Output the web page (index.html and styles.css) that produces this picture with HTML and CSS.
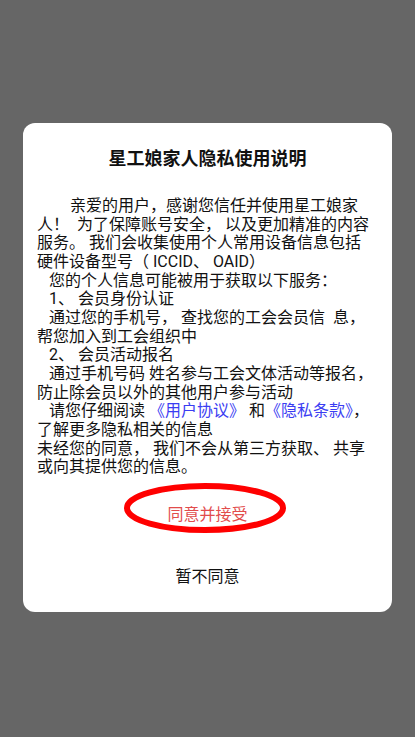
FILE: index.html
```html
<!DOCTYPE html>
<html lang="zh-CN">
<head>
    <meta charset="UTF-8">
    <meta name="viewport" content="width=device-width, initial-scale=1.0">
    <title>隐私使用说明</title>
    <link rel="stylesheet" href="styles.css">
</head>
<body>
    <div class="dialog">
        <h1 class="dialog-title">星工娘家人隐私使用说明</h1>
        <div class="dialog-body">
            <div class="line first">亲爱的用户，感谢您信任并使用星工娘家</div>
            <div class="line">人！  为了保障账号安全， 以及更加精准的内容</div>
            <div class="line">服务。 我们会收集使用个人常用设备信息包括</div>
            <div class="line">硬件设备型号（ ICCID、 OAID）</div>
            <div class="line ind">您的个人信息可能被用于获取以下服务：</div>
            <div class="line ind">1、 会员身份认证</div>
            <div class="line ind">通过您的手机号， 查找您的工会会员信  息，</div>
            <div class="line">帮您加入到工会组织中</div>
            <div class="line ind">2、 会员活动报名</div>
            <div class="line ind">通过手机号码 姓名参与工会文体活动等报名，</div>
            <div class="line">防止除会员以外的其他用户参与活动</div>
            <div class="line ind">请您仔细阅读 <a class="link" href="#">《用户协议》</a> 和<a class="link" href="#">《隐私条款》</a>，</div>
            <div class="line">了解更多隐私相关的信息</div>
            <div class="line">未经您的同意， 我们不会从第三方获取、 共享</div>
            <div class="line">或向其提供您的信息。</div>
        </div>
        <div class="actions">
            <button class="btn btn-agree">
                同意并接受
                <svg class="mark" width="162" height="50" viewBox="0 0 162 50">
                    <ellipse cx="81" cy="25" rx="78" ry="22" fill="none" stroke="#ff0000" stroke-width="6"/>
                </svg>
            </button>
            <button class="btn btn-decline">暂不同意</button>
        </div>
    </div>
</body>
</html>
```

FILE: styles.css
```css
:root {
    --overlay: #666666;
    --card: #ffffff;
    --text: #111111;
    --link: #3b3df2;
    --agree: #e24c4c;
}
* {
    box-sizing: border-box;
}
body {
    margin: 0;
    padding: 123px 23px 0;
    min-height: 737px;
    background-color: var(--overlay);
    font-family: Roboto, "Noto Sans CJK SC", sans-serif;
    color: var(--text);
}
.dialog {
    background-color: var(--card);
    border-radius: 12px;
    height: 489px;
    padding: 24px 0 0;
    display: flex;
    flex-direction: column;
}
.dialog-title {
    margin: 0;
    font-size: 18px;
    line-height: 24px;
    font-weight: 700;
    text-align: center;
}
.dialog-body {
    margin-top: 26px;
    padding: 0 10px 0 14px;
    font-size: 16px;
    line-height: 18.65px;
}
.line {
    white-space: pre;
}
.line.first {
    padding-left: 33px;
}
.line.ind {
    padding-left: 12px;
}
.link {
    color: var(--link);
    text-decoration: none;
}
.actions {
    margin-top: 16px;
    display: flex;
    flex-direction: column;
    gap: 22px;
}
.btn {
    position: relative;
    height: 40px;
    border: none;
    background: none;
    font-family: Roboto, "Noto Sans CJK SC", sans-serif;
    font-size: 16px;
    padding: 0;
    cursor: pointer;
}
.btn-agree {
    color: var(--agree);
}
.btn-decline {
    color: var(--text);
}
.mark {
    position: absolute;
    left: 101px;
    top: -10px;
    pointer-events: none;
}
```
